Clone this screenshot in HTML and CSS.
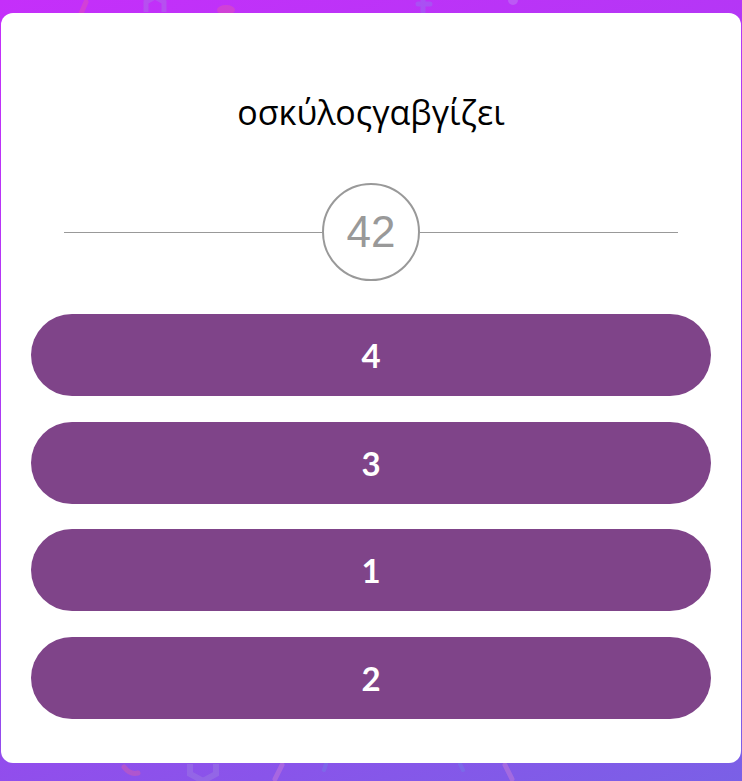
FILE: index.html
```html
<!DOCTYPE html>
<html lang="el">
<head>
    <meta charset="UTF-8">
    <meta name="viewport" content="width=device-width, initial-scale=1.0">
    <title>Quiz</title>
    <link rel="stylesheet" href="styles.css">
</head>
<body>
    <svg class="decor" width="742" height="781" viewBox="0 0 742 781" aria-hidden="true">
        <g opacity="0.35">
            <line x1="86" y1="2" x2="80" y2="16" stroke="#f0609a" stroke-width="5" stroke-linecap="round"/>
            <path d="M146 12 L146 2 L155 -3 L164 2 L164 12" fill="none" stroke="#a48ae0" stroke-width="5"/>
            <ellipse cx="226" cy="10" rx="9" ry="5" fill="#f0609a"/>
            <path d="M423 -2 L423 12 M418 4 L430 4" stroke="#8a86ee" stroke-width="5" stroke-linecap="round"/>
            <circle cx="513" cy="0" r="5" fill="#c0a0f0"/>
            <path d="M124 767 q6 8 14 6" fill="none" stroke="#f0609a" stroke-width="5" stroke-linecap="round"/>
            <path d="M190 764 L190 774 L203 781 L216 774 L216 764" fill="none" stroke="#a48ae0" stroke-width="6"/>
            <line x1="282" y1="765" x2="275" y2="779" stroke="#e48ad2" stroke-width="5" stroke-linecap="round"/>
            <line x1="326" y1="764" x2="324" y2="770" stroke="#6e8ae8" stroke-width="4" stroke-linecap="round"/>
            <line x1="460" y1="764" x2="463" y2="770" stroke="#6e8ae8" stroke-width="4" stroke-linecap="round"/>
            <line x1="505" y1="765" x2="512" y2="779" stroke="#e48ad2" stroke-width="5" stroke-linecap="round"/>
        </g>
    </svg>

    <div class="card">
        <h1 class="question">οσκύλοςγαβγίζει</h1>

        <div class="counter">
            <span class="counter-line"></span>
            <span class="counter-circle">42</span>
            <span class="counter-line"></span>
        </div>

        <div class="answers">
            <button type="button" class="answer">4</button>
            <button type="button" class="answer">3</button>
            <button type="button" class="answer">1</button>
            <button type="button" class="answer">2</button>
        </div>
    </div>
</body>
</html>
```

FILE: styles.css
```css
html, body {
    height: 100%;
}
body {
    margin: 0;
    position: relative;
    overflow: hidden;
    font-family: Lato, "Open Sans", sans-serif;
    background: linear-gradient(160deg, #c52ffa 0%, #a63df2 50%, #7a60e6 100%);
}
.decor {
    position: absolute;
    left: 0;
    top: 0;
}
.card {
    position: relative;
    margin: 13px 1px 0;
    height: 750px;
    box-sizing: border-box;
    padding: 79px 30px 0;
    background: #fff;
    border-radius: 12px;
}
.question {
    margin: 0;
    font-family: "Open Sans", sans-serif;
    font-size: 34px;
    font-weight: 400;
    line-height: 40px;
    text-align: center;
    color: #000;
}
.counter {
    display: flex;
    align-items: center;
    margin: 51px 33px 0;
}
.counter-line {
    flex: 1;
    height: 1px;
    background: #999;
}
.counter-circle {
    width: 94px;
    height: 94px;
    border: 2px solid #999;
    border-radius: 50%;
    display: flex;
    align-items: center;
    justify-content: center;
    font-family: "Liberation Sans", Arial, sans-serif;
    font-size: 44px;
    color: #999;
}
.answers {
    display: flex;
    flex-direction: column;
    gap: 25.7px;
    margin-top: 33px;
}
.answer {
    height: 82px;
    border: none;
    border-radius: 41px;
    background: #7f4489;
    color: #fff;
    font-family: Lato, sans-serif;
    font-size: 33px;
    font-weight: 700;
    cursor: pointer;
}
```
